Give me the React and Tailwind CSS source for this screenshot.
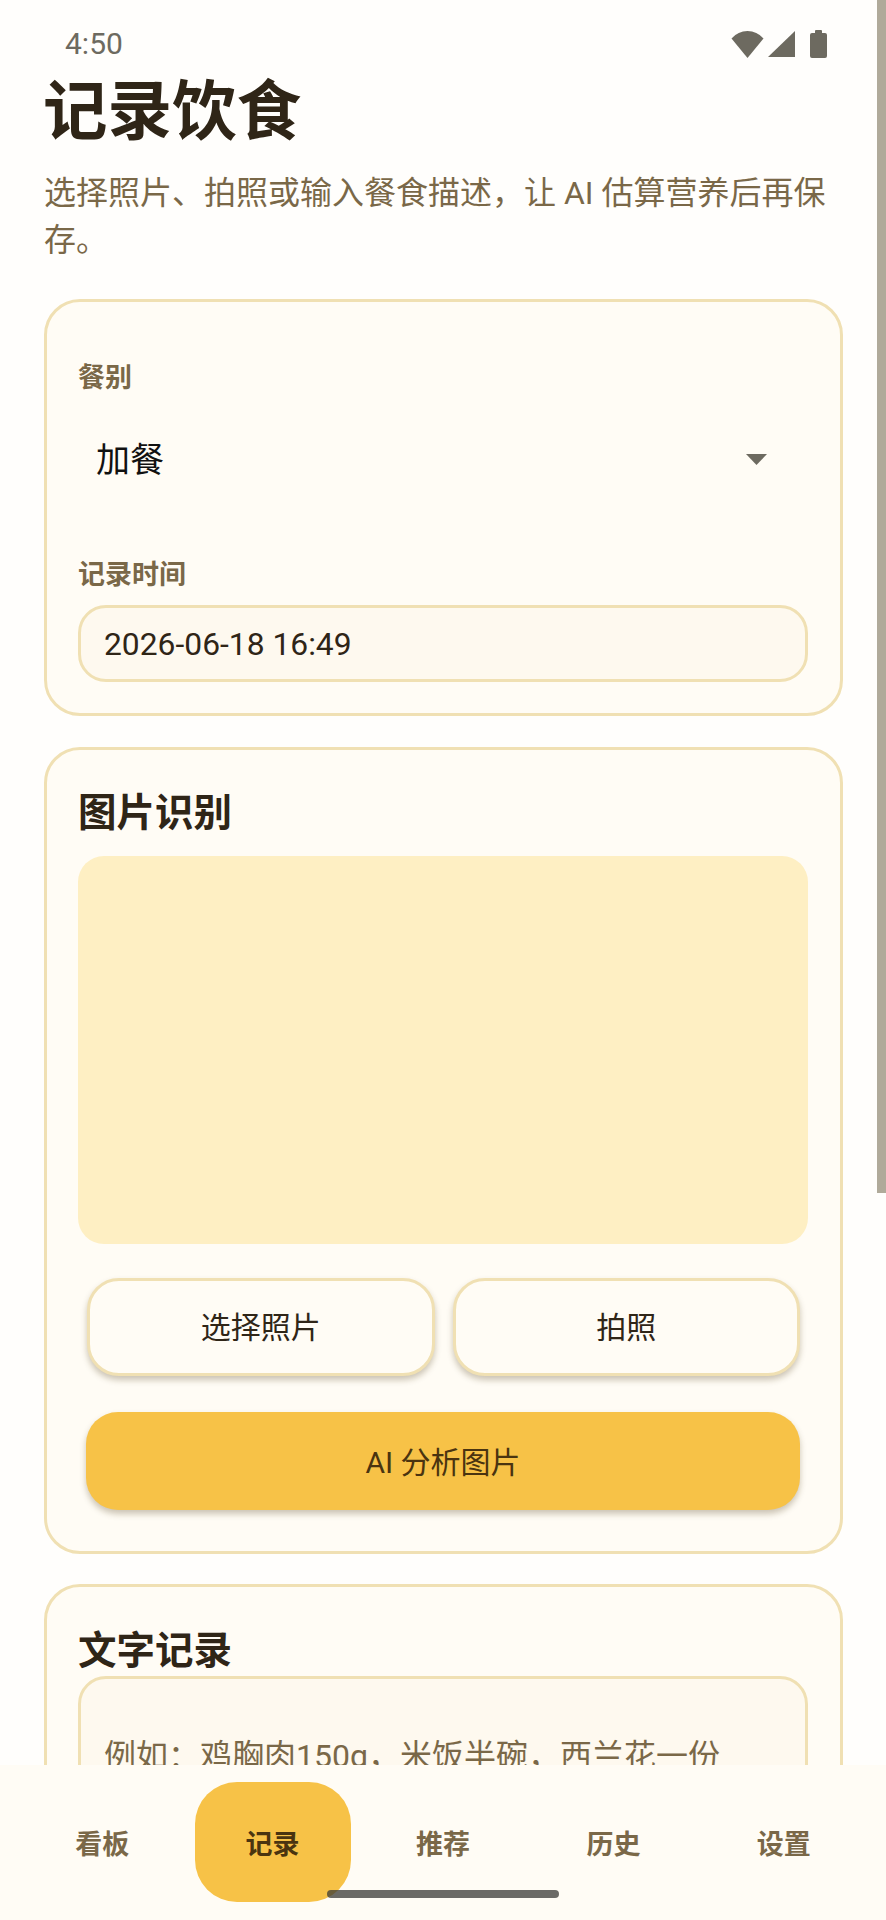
const font = "font-['Roboto','Noto_Sans_CJK_SC',sans-serif]";

function Wifi() {
  return (
    <svg width="33" height="27" viewBox="0 0 33 27" className="fill-[#6d6a60]">
      <path d="M16.5 27 L0.5 7.5 Q7 0 16.5 0 Q26 0 32.5 7.5 Z" />
    </svg>
  );
}

function Signal() {
  return (
    <svg width="27" height="26" viewBox="0 0 27 26" className="fill-[#6d6a60]">
      <path d="M27 0 V26 H0 Z" />
    </svg>
  );
}

function Battery() {
  return (
    <svg width="17" height="28" viewBox="0 0 17 28" className="fill-[#6d6a60]">
      <path d="M5 3 V1 Q5 0 6 0 H11 Q12 0 12 1 V3 H15 Q17 3 17 5 V26 Q17 28 15 28 H2 Q0 28 0 26 V5 Q0 3 2 3 Z" />
    </svg>
  );
}

function Card({ className, children }) {
  return (
    <section className={`rounded-[36px] border-[3px] border-[#f0e0b3] bg-[#fffcf5] pl-[31px] pr-[32px] ${className}`}>
      {children}
    </section>
  );
}

function Label({ children }) {
  return <div className="text-[27px] leading-[36px] font-bold text-[#7a6848]">{children}</div>;
}

function Title({ children }) {
  return <h2 className="text-[38.5px] leading-[50px] font-bold text-[#2f2517]">{children}</h2>;
}

const tabs = ["看板", "记录", "推荐", "历史", "设置"];

export default function App() {
  return (
    <div className={`relative flex h-[1920px] w-[886px] flex-col overflow-hidden bg-[#fffefc] ${font}`}>
      <main className="min-h-0 flex-1 overflow-hidden pl-[44px] pr-[43px]">
        <div className="mt-[16px] flex h-[56px] items-center justify-between pl-[21px] pr-[16px]">
          <span className="text-[30px] leading-[40px] text-[#6d6a60]">4:50</span>
          <div className="flex items-center gap-[4px]">
            <Wifi />
            <Signal />
            <div className="ml-[11px]"><Battery /></div>
          </div>
        </div>
        <h1 className="-ml-[1px] text-[64.5px] leading-[80px] font-bold text-[#2f2517]">记录饮食</h1>
        <p className="mt-[18px] text-[32px] leading-[47px] text-[#7a6848]">
          选择照片、拍照或输入餐食描述，让 AI 估算营养后再保存。
        </p>

        <Card className="mt-[35px] pt-[58px] pb-[31px]">
          <Label>餐别</Label>
          <div className="mt-[23px] flex h-[82px] items-center justify-between pl-[18px] pr-[41px]">
            <span className="text-[34px] text-[#111111]">加餐</span>
            <svg width="21" height="11" viewBox="0 0 21 11" className="-mt-[2px] fill-[#6d6a60]">
              <path d="M0 0 H21 L10.5 11 Z" />
            </svg>
          </div>
          <div className="mt-[56px]"><Label>记录时间</Label></div>
          <div className="mt-[12px] flex h-[77px] items-center rounded-[28px] border-[3px] border-[#f0e0b3] bg-[#fef9ef] px-[23px] pt-[2px] text-[31.8px] text-[#2f2517]">
            2026-06-18 16:49
          </div>
        </Card>

        <Card className="mt-[31px] pt-[38px] pb-[41px]">
          <Title>图片识别</Title>
          <div className="mt-[18px] h-[388px] rounded-[26px] bg-[#feefc3]" />
          <div className="mt-[34px] flex gap-[18px] pl-[9px] pr-[8px]">
            <button className="h-[98px] flex-1 rounded-[32px] border-[3px] border-[#f0e0b3] bg-[#fffcf5] text-[30px] text-[#2f2517] shadow-[0_4px_6px_rgba(70,50,10,0.28)]">
              选择照片
            </button>
            <button className="h-[98px] flex-1 rounded-[32px] border-[3px] border-[#f0e0b3] bg-[#fffcf5] text-[30px] text-[#2f2517] shadow-[0_4px_6px_rgba(70,50,10,0.28)]">
              拍照
            </button>
          </div>
          <button className="ml-[8px] mt-[36px] block h-[98px] w-[714px] rounded-[32px] bg-[#f7c247] pt-[3px] text-[30px] text-[#4a3410] shadow-[0_4px_6px_rgba(70,50,10,0.28)]">
            AI 分析图片
          </button>
        </Card>

        <Card className="mt-[30px] pt-[39px] pb-[40px]">
          <Title>文字记录</Title>
          <div className="mt-[0px] h-[220px] rounded-[28px] border-[3px] border-[#f0e0b3] bg-[#fef9ef] px-[23px] pt-[54px] text-[32px] leading-[46px] text-[#7a6848]">
            例如：鸡胸肉150g，米饭半碗，西兰花一份
          </div>
        </Card>
      </main>

      <nav className="flex h-[155px] shrink-0 items-center bg-[#fffcf5] px-[17px] pb-[2px]">
        {tabs.map((t) => (
          <div key={t} className="flex flex-1 justify-center">
            <div className={`flex h-[120px] w-[156px] items-center justify-center rounded-[42px] pt-[7px] text-[27px] font-bold ${t === "记录" ? "bg-[#f7c247] text-[#4a3410]" : "text-[#7a6848]"}`}>
              {t}
            </div>
          </div>
        ))}
      </nav>

      <div className="absolute top-0 right-0 h-[1193px] w-[9px] bg-[#b0aa9a]" />
      <div className="absolute bottom-[22px] left-[327px] h-[8px] w-[232px] rounded-full bg-[#3a3a35]/75" />
    </div>
  );
}
